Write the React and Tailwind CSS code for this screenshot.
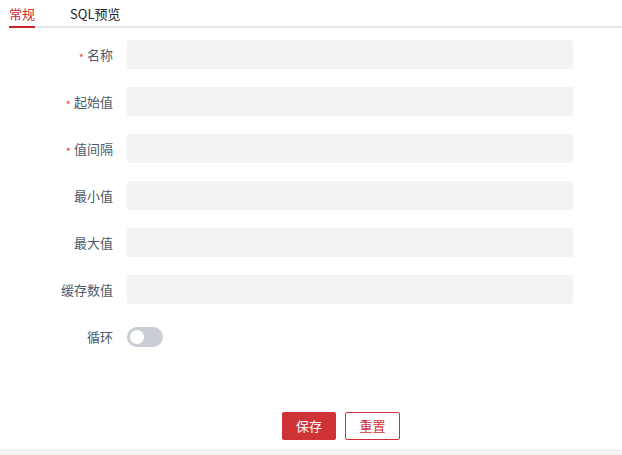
import React from 'react'

const fields = [
	{ label: '名称', required: true },
	{ label: '起始值', required: true },
	{ label: '值间隔', required: true },
	{ label: '最小值' },
	{ label: '最大值' },
	{ label: '缓存数值' },
]

function Label({ text, required }) {
	return (
		<div className="w-[113px] shrink-0 flex items-center justify-end text-[13px] text-[#4e5969]">
			{required && <span className="relative top-[3px] text-[#f53f3f] text-[11px] mr-[3px] leading-none">*</span>}
			<span>{text}</span>
		</div>
	)
}

export default function App() {
	return (
		<div
			className="w-[622px] h-[455px] bg-white flex flex-col"
			style={{ fontFamily: '"Noto Sans CJK SC", "Noto Sans", sans-serif' }}
		>
			{/* tabs */}
			<div className="ml-[9px] flex gap-[35px] border-b-2 border-[#e5e6eb] h-[28px] items-end text-[13px]">
				<div className="relative pb-[6px] text-[#c9252b] leading-none">
					常规
					<div className="absolute left-0 right-0 -bottom-[2px] h-[2px] bg-[#c9252b]"></div>
				</div>
				<div className="pb-[6px] text-[#1d2129] leading-none">SQL预览</div>
			</div>

			{/* form */}
			<div className="mt-[12px] flex flex-col gap-[18px]">
				{fields.map((f) => (
					<div key={f.label} className="flex h-[29px]">
						<Label text={f.label} required={f.required} />
						<div className="ml-[14px] w-[446px] h-[29px] rounded-[2px] bg-[#f2f3f5]"></div>
					</div>
				))}
				<div className="flex h-[29px] items-center">
					<Label text="循环" />
					<div className="ml-[14px] w-[36px] h-[20px] rounded-full bg-[#c9cdd4] flex items-center px-[3px]">
						<div className="w-[14px] h-[14px] rounded-full bg-white"></div>
					</div>
				</div>
			</div>

			{/* actions */}
			<div className="mt-[61px] flex justify-center gap-[9px] pl-[60px]">
				<button className="w-[54px] h-[28px] rounded-[2px] bg-[#cf3338] text-white text-[13px]">保存</button>
				<button className="w-[55px] h-[28px] rounded-[2px] border border-[#cf3338] bg-white text-[#cf3338] text-[13px]">重置</button>
			</div>

			<div className="mt-auto h-[6px] bg-[#f2f3f5]"></div>
		</div>
	)
}
